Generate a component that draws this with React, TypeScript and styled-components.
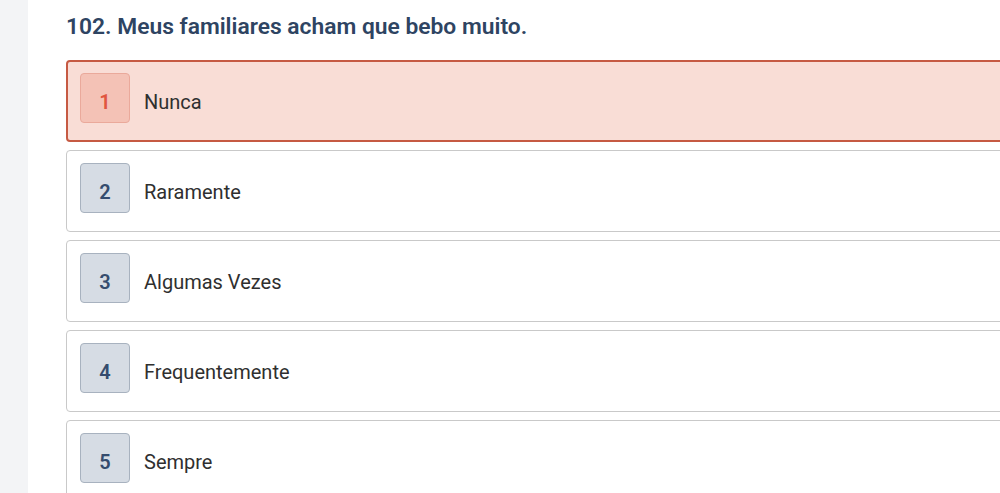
import React from "react";
import styled, { createGlobalStyle } from "styled-components";

const Global = createGlobalStyle`
  html, body { margin: 0; padding: 0; background: #ffffff; }
  body { font-family: Roboto, "Liberation Sans", Arial, sans-serif; overflow: hidden; }
`;

const Page = styled.div`
  display: flex;
  width: 1000px;
  height: 493px;
  overflow: hidden;
`;

const Sidebar = styled.div`
  width: 28px;
  flex: none;
  background: #f3f4f6;
`;

const Main = styled.main`
  flex: 1;
  background: #ffffff;
  padding: 13px 0 0 38px;
  min-width: 0;
`;

const Title = styled.h2`
  margin: 0 0 19px;
  font-size: 22.8px;
  line-height: 28px;
  font-weight: 600;
  color: #2e4462;
`;

const Options = styled.div`
  display: flex;
  flex-direction: column;
  gap: 8px;
  width: 960px;
`;

const Option = styled.div<{ $selected?: boolean }>`
  display: flex;
  align-items: center;
  gap: 14px;
  box-sizing: border-box;
  height: 82px;
  border-radius: 4px;
  border: ${(p) => (p.$selected ? "2px solid #c65a43" : "1px solid #c9c9c9")};
  background: ${(p) => (p.$selected ? "#f9ddd6" : "#ffffff")};
  padding: ${(p) => (p.$selected ? "0 12px 6px" : "0 13px 6px")};
`;

const Badge = styled.div<{ $selected?: boolean }>`
  width: 50px;
  height: 50px;
  flex: none;
  box-sizing: border-box;
  display: flex;
  align-items: center;
  justify-content: center;
  padding-top: 7px;
  border-radius: 4px;
  border: 1px solid ${(p) => (p.$selected ? "#eaa99b" : "#a8b2bf")};
  background: ${(p) => (p.$selected ? "#f4c2b6" : "#d6dce4")};
  color: ${(p) => (p.$selected ? "#e0563f" : "#354c6e")};
  font-size: 20px;
  font-weight: 600;
`;

const Label = styled.span`
  padding-top: 7px;
  font-size: 20px;
  color: #2f2f2f;
`;

const options = ["Nunca", "Raramente", "Algumas Vezes", "Frequentemente", "Sempre"];

export default function App() {
  return (
    <Page>
      <Global />
      <Sidebar />
      <Main>
        <Title>102. Meus familiares acham que bebo muito.</Title>
        <Options>
          {options.map((o, i) => (
            <Option key={o} $selected={i === 0}>
              <Badge $selected={i === 0}>{i + 1}</Badge>
              <Label>{o}</Label>
            </Option>
          ))}
        </Options>
      </Main>
    </Page>
  );
}
